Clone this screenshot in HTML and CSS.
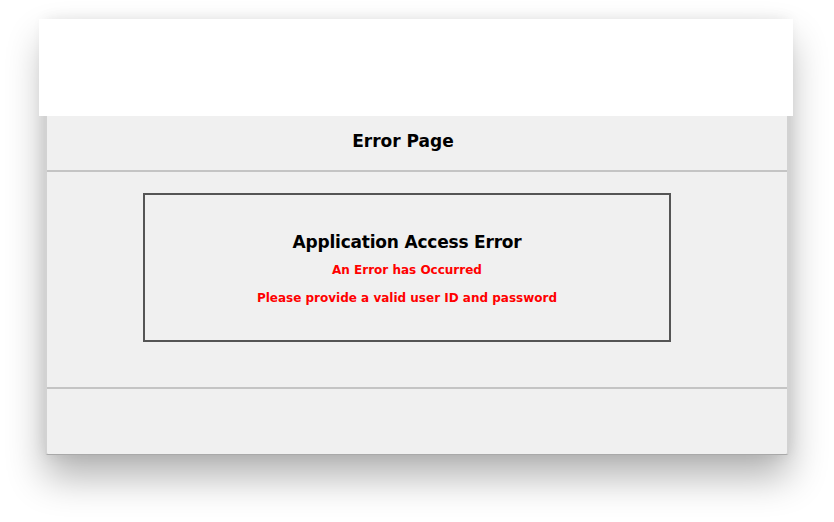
FILE: index.html
```html
<!DOCTYPE html>
<html>
<head>
<meta charset="utf-8">
<link rel="stylesheet" href="styles.css">
</head>
<body>
<div class="stage">
  <div class="window">
    <div class="topbar"></div>
    <div class="title-row"><h1 class="title">Error Page</h1></div>
    <div class="content">
      <div class="error-box">
        <h2 class="error-heading">Application Access Error</h2>
        <p class="error-msg">An Error has Occurred</p>
        <p class="error-msg">Please provide a valid user ID and password</p>
      </div>
    </div>
    <div class="footer"></div>
  </div>
</div>
</body>
</html>
```
FILE: styles.css
```css
html, body {
  margin: 0;
  padding: 0;
  background: #ffffff;
  width: 834px;
  height: 522px;
  overflow: hidden;
}
.stage {
  padding: 19px 0 0 45px;
}
.window {
  width: 744px;
  height: 436px;
  display: flex;
  flex-direction: column;
  background: #f0f0f0;
  box-sizing: border-box;
  border-left: 2px solid #d2d2d2;
  border-right: 2px solid #d2d2d2;
  border-bottom: 1px solid #a9a9a9;
  border-radius: 0 0 3px 3px;
  box-shadow: 0 22px 38px rgba(0, 0, 0, 0.3), 0 0 14px rgba(0, 0, 0, 0.08);
  font-family: "DejaVu Sans", Verdana, sans-serif;
}
.topbar {
  height: 97px;
  margin: 0 -6px 0 -8px;
  background: #ffffff;
  flex: none;
}
.title-row {
  flex: none;
  display: flex;
  align-items: center;
  justify-content: center;
  border-bottom: 2px solid #c4c4c4;
  padding: 0 28px 4px 0;
  box-sizing: border-box;
  height: 56px;
}
.title {
  margin: 0;
  font-size: 17px;
  font-weight: bold;
  color: #000;
}
.content {
  height: 217px;
  flex: none;
  box-sizing: border-box;
  padding: 21px 0 0 96px;
  border-bottom: 2px solid #c4c4c4;
}
.error-box {
  width: 528px;
  height: 149px;
  box-sizing: border-box;
  border: 2px solid #555555;
  display: flex;
  flex-direction: column;
  align-items: center;
  padding-top: 36px;
}
.error-heading {
  margin: 0 0 9px;
  font-size: 17px;
  letter-spacing: -0.2px;
  font-weight: bold;
  color: #000;
  line-height: 22px;
}
.error-msg {
  margin: 0 0 12px;
  font-size: 12px;
  font-weight: bold;
  color: #ff0000;
  line-height: 16px;
}
.footer {
  flex: 1;
}
```
